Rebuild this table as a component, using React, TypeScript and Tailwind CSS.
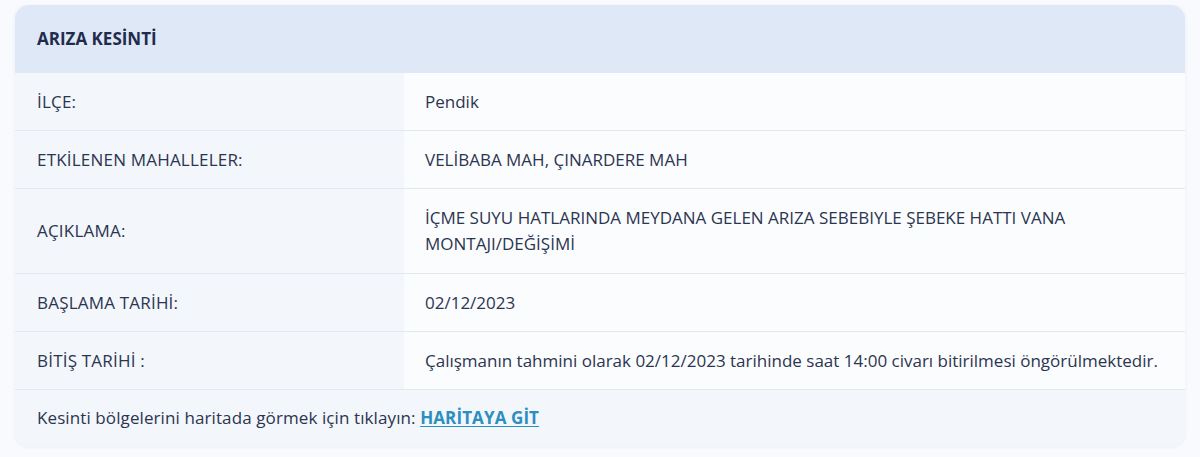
const rows: { label: string; value: string[] }[] = [
  { label: 'İLÇE:', value: ['Pendik'] },
  { label: 'ETKİLENEN MAHALLELER:', value: ['VELİBABA MAH, ÇINARDERE MAH'] },
  {
    label: 'AÇIKLAMA:',
    value: ['İÇME SUYU HATLARINDA MEYDANA GELEN ARIZA SEBEBIYLE ŞEBEKE HATTI VANA', 'MONTAJI/DEĞİŞİMİ'],
  },
  { label: 'BAŞLAMA TARİHİ:', value: ['02/12/2023'] },
  {
    label: 'BİTİŞ TARİHİ :',
    value: ['Çalışmanın tahmini olarak 02/12/2023 tarihinde saat 14:00 civarı bitirilmesi öngörülmektedir.'],
  },
];

export default function App() {
  return (
    <div className="h-[457px] w-[1200px] bg-[#f8fafd] px-[15px] pt-[5px] font-['Open_Sans',sans-serif] text-[17px] text-[#2b3550]">
      <div className="overflow-hidden rounded-[14px] bg-[#f3f6fb] shadow-[0_1px_4px_rgba(30,50,90,0.06)]">
        <div className="flex h-[68px] items-center bg-[#dfe8f6] px-[22px] font-bold text-[#1f2c4c]">
          ARIZA KESİNTİ
        </div>
        {rows.map((r, i) => (
          <div
            key={r.label}
            className={`grid grid-cols-[389px_1fr] border-b border-[#e3e8ef] ${i === 2 ? 'min-h-[85px]' : 'min-h-[58px]'}`}
          >
            <div className="flex items-center bg-[#f3f6fb] px-[22px] tracking-[0.2px]">{r.label}</div>
            <div className="flex flex-col justify-center bg-[#fbfcfe] px-[21px] leading-[26px]">
              {r.value.map((v) => (
                <span key={v}>{v}</span>
              ))}
            </div>
          </div>
        ))}
        <div className="flex h-[56px] items-center px-[22px] tracking-[0.1px]">
          Kesinti bölgelerini haritada görmek için tıklayın:&nbsp;
          <a href="#" className="font-bold text-[#2b8fbf] underline underline-offset-2">
            HARİTAYA GİT
          </a>
        </div>
      </div>
    </div>
  );
}
